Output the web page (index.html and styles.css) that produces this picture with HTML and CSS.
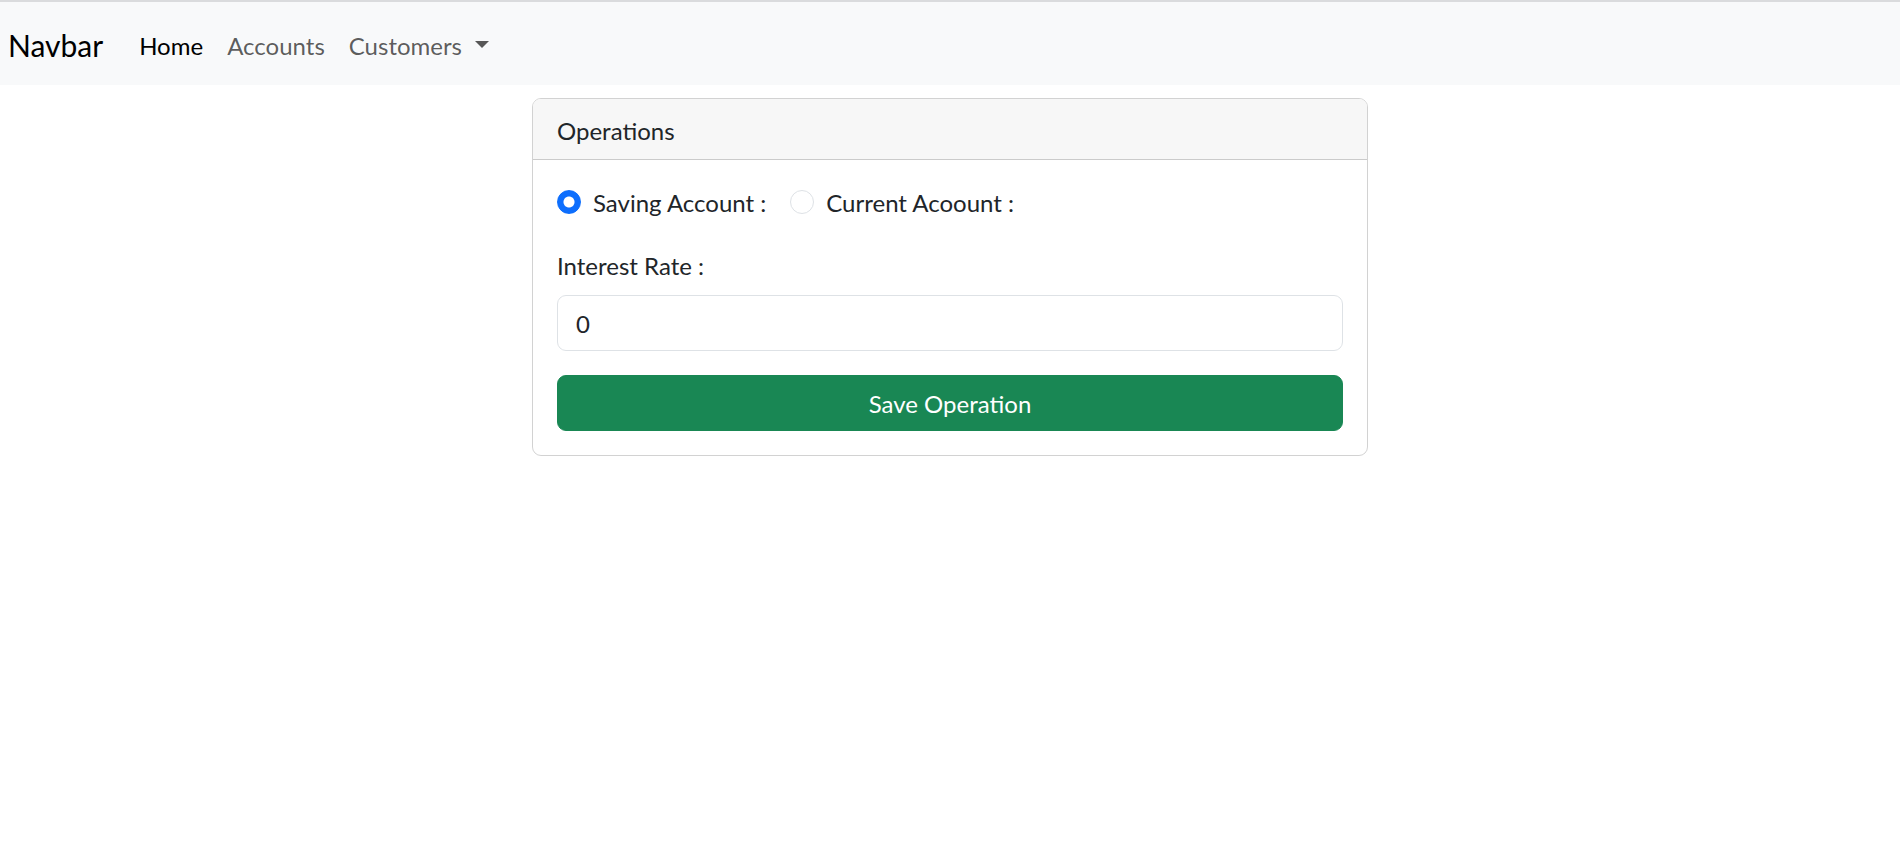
FILE: index.html
```html
<!DOCTYPE html>
<html lang="en">
<head>
<meta charset="utf-8">
<title>Operations</title>
<link rel="stylesheet" href="styles.css">
</head>
<body>
<nav class="navbar">
  <a class="brand" href="#">Navbar</a>
  <ul class="nav-list">
    <li><a class="nav-link active" href="#">Home</a></li>
    <li><a class="nav-link" href="#">Accounts</a></li>
    <li><a class="nav-link dropdown" href="#">Customers<span class="caret"></span></a></li>
  </ul>
</nav>
<main class="page">
  <section class="card">
    <header class="card-header">Operations</header>
    <form class="card-body">
      <div class="radio-row">
        <label class="check">
          <input class="radio" type="radio" name="type" checked>
          <span class="check-label">Saving Account :</span>
        </label>
        <label class="check">
          <input class="radio" type="radio" name="type">
          <span class="check-label">Current Acoount :</span>
        </label>
      </div>
      <label class="form-label" for="rate">Interest Rate :</label>
      <input class="form-control" id="rate" type="text" value="0">
      <button class="btn-save" type="button">Save Operation</button>
    </form>
  </section>
</main>
</body>
</html>
```

FILE: styles.css
```css
* {
  box-sizing: border-box;
}

html, body {
  margin: 0;
  padding: 0;
  background: #ffffff;
}

body {
  font-family: "Segoe UI", Lato, "Noto Sans", sans-serif;
  font-size: 24px;
  line-height: 36px;
  color: #212529;
}

.navbar {
  display: flex;
  align-items: center;
  height: 85px;
  border-top: 2px solid #dadbdd;
  background: #f8f9fa;
  padding: 14px 8px 10px;
}

.brand {
  font-size: 30px;
  line-height: 45px;
  color: #000;
  text-decoration: none;
  margin-right: 24px;
}

.nav-list {
  display: flex;
  list-style: none;
  margin: 0;
  padding: 0;
}

.nav-link {
  display: flex;
  align-items: baseline;
  padding: 0 12px;
  font-size: 24px;
  line-height: 36px;
  color: rgba(0, 0, 0, 0.65);
  text-decoration: none;
}

.nav-link.active {
  color: #000;
}

.caret {
  display: inline-block;
  width: 0;
  height: 0;
  margin-left: 13px;
  border-top: 7px solid rgba(0, 0, 0, 0.65);
  border-left: 7px solid transparent;
  border-right: 7px solid transparent;
  position: relative;
  top: -7px;
}

.page {
  display: flex;
  justify-content: center;
  padding-top: 13px;
}

.card {
  width: 836px;
  border: 1px solid rgba(0, 0, 0, 0.175);
  border-radius: 9px;
  overflow: hidden;
}

.card-header {
  padding: 14px 24px 10px;
  background: #f7f7f7;
  border-bottom: 1px solid rgba(0, 0, 0, 0.175);
  line-height: 36px;
}

.card-body {
  display: flex;
  flex-direction: column;
  padding: 24px;
  margin: 0;
}

.radio-row {
  display: flex;
  margin-bottom: 27px;
}

.check {
  display: flex;
  align-items: flex-start;
  margin-right: 24px;
}

.radio {
  appearance: none;
  -webkit-appearance: none;
  width: 24px;
  height: 24px;
  margin: 6px 12px 0 0;
  border: 1px solid #dee2e6;
  border-radius: 50%;
  background: #fff;
  flex: none;
}

.radio:checked {
  border-color: #0d6efd;
  background: radial-gradient(circle at center, #ffffff 0 5px, #0d6efd 6px);
}

.check-label {
  line-height: 34px;
  padding-top: 2px;
}

.form-label {
  display: block;
  line-height: 35px;
  padding-top: 1px;
  margin-bottom: 12px;
}

.form-control {
  display: block;
  width: 100%;
  height: 56px;
  padding: 0 18px;
  font-family: inherit;
  font-size: 24px;
  color: #212529;
  background: #fff;
  border: 1px solid #dee2e6;
  border-radius: 9px;
  margin: 0 0 24px;
  outline: none;
}

.btn-save {
  display: block;
  width: 100%;
  height: 56px;
  font-family: inherit;
  font-size: 24px;
  color: #fff;
  background: #198754;
  border: 1px solid #198754;
  border-radius: 9px;
  cursor: pointer;
}
```
